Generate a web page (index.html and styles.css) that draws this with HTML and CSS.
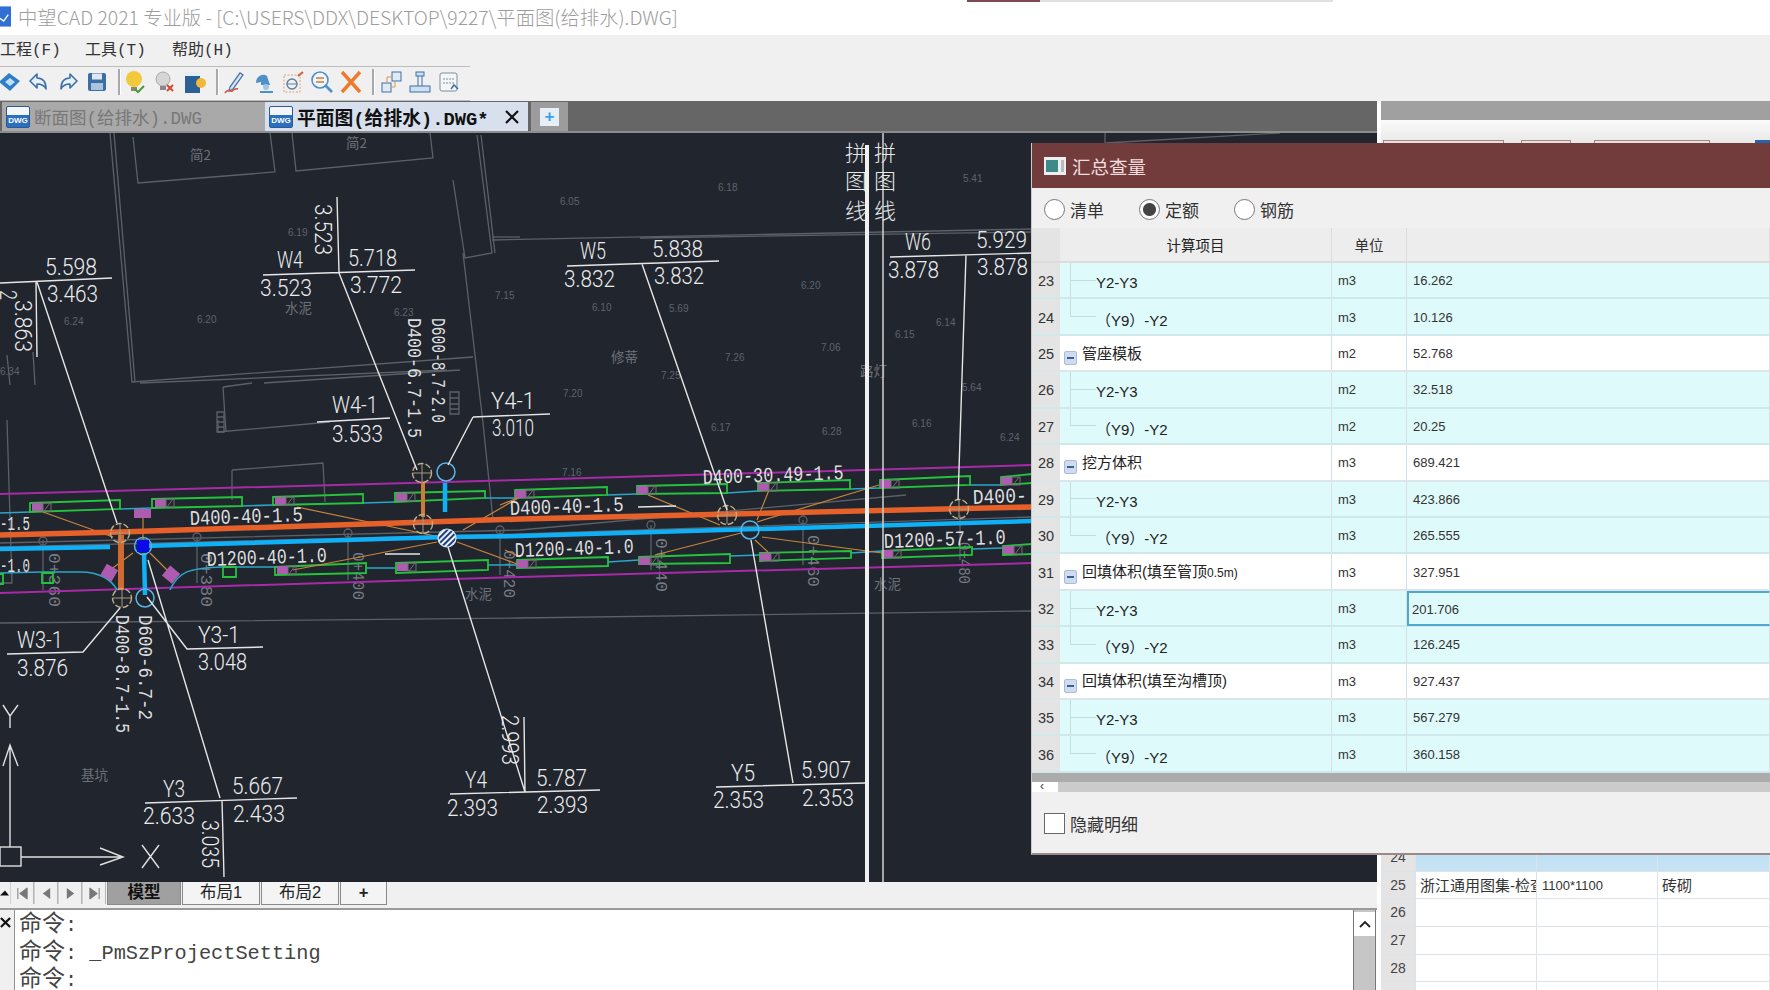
FILE: index.html
```html
<!DOCTYPE html>
<html lang="zh-CN">
<head>
<meta charset="utf-8">
<title>中望CAD 2021 专业版</title>
<link rel="stylesheet" href="styles.css">
</head>
<body>
<div class="app">
  <header class="titlebar">
    <svg class="app-icon" viewBox="0 0 12 22"><rect width="12" height="22" fill="#2f6fd6"/><path d="M0 13l4 3 5-7" fill="none" stroke="#fff" stroke-width="1.6"/></svg>
    <span class="title-text">中望CAD 2021 专业版 - [C:\USERS\DDX\DESKTOP\9227\平面图(给排水).DWG]</span>
    <span class="peek"><i class="peek-red"></i></span>
  </header>
  <nav class="menubar">
    <span class="menu-item m1">工程(F)</span><span class="menu-item m2">工具(T)</span><span class="menu-item m3">帮助(H)</span>
  </nav>
  <div class="toolbar">
    <div class="tool-group g1">
      <svg class="tool" viewBox="0 0 24 24"><path d="M1 12L11 3l11 8-10 10z" fill="#2f7fc8"/><path d="M7 12l5-4 5 4-5 4z" fill="#bfe0f5"/></svg>
      <svg class="tool" viewBox="0 0 24 24"><path d="M10 4L3 11l7 7v-4c4 0 7 1 9 5 0-7-3-11-9-11z" fill="#e8f0fa" stroke="#3d6fa8" stroke-width="1.6" stroke-linejoin="round"/></svg>
      <svg class="tool" viewBox="0 0 24 24"><path d="M14 4l7 7-7 7v-4c-4 0-7 1-9 5 0-7 3-11 9-11z" fill="#e8f0fa" stroke="#3d6fa8" stroke-width="1.6" stroke-linejoin="round"/></svg>
      <svg class="tool" viewBox="0 0 24 24"><rect x="3" y="3" width="18" height="18" rx="2" fill="#3a6ea5"/><rect x="7" y="3.5" width="10" height="6" fill="#dfe8f2"/><rect x="6" y="13" width="12" height="7" fill="#a8c4de"/></svg>
    </div>
    <i class="tool-sep s1"></i>
    <div class="tool-group g2">
      <svg class="tool" viewBox="0 0 24 24"><circle cx="11" cy="9" r="8" fill="#f3c93c"/><rect x="8" y="17" width="6" height="4" fill="#8a8a6a"/><path d="M12 19l3 3 6-6" fill="none" stroke="#4a9a3a" stroke-width="2"/></svg>
      <svg class="tool" viewBox="0 0 24 24"><circle cx="10" cy="9" r="7" fill="#d5d5d5" stroke="#aaa"/><rect x="7" y="16" width="6" height="4" fill="#888"/><path d="M14 15l6 6m0-6l-6 6" stroke="#d2482e" stroke-width="2"/></svg>
      <svg class="tool" viewBox="0 0 24 24"><rect x="2" y="2" width="15" height="21" fill="#2c5f96"/><rect x="2" y="2" width="15" height="4" fill="#e5edf5"/><circle cx="18" cy="13" r="5" fill="#f0b93a"/></svg>
    </div>
    <i class="tool-sep s2"></i>
    <div class="tool-group g3">
      <svg class="tool" viewBox="0 0 24 24"><path d="M7 17L17 3l3 2-10 14-4 2z" fill="#dfe8f2" stroke="#4b79ad" stroke-width="1.3"/><path d="M2 23c3-5 5-1 7-2s3-3 6-2" fill="none" stroke="#d8503c" stroke-width="1.5"/></svg>
      <svg class="tool" viewBox="0 0 24 24"><path d="M4 13c0-7 7-10 11-7l3 9H9v-3z" fill="#4f90c8"/><circle cx="14" cy="17" r="3" fill="#9cc7e8"/><path d="M8 22h13" stroke="#4f90c8" stroke-width="2"/></svg>
      <svg class="tool" viewBox="0 0 24 24"><rect x="3" y="5" width="16" height="17" fill="none" stroke="#e0a07a" stroke-dasharray="2 1.5"/><circle cx="11" cy="14" r="5" fill="none" stroke="#5b7f9e" stroke-width="1.4"/><path d="M6 14h10" stroke="#5b7f9e"/><path d="M17 6l5-4" stroke="#e05a2a" stroke-width="2"/></svg>
      <svg class="tool" viewBox="0 0 24 24"><circle cx="10" cy="10" r="8" fill="#eef5fb" stroke="#4f90c8" stroke-width="1.6"/><path d="M15 15l7 7" stroke="#4f90c8" stroke-width="2.6"/><path d="M6 8h8M6 12h8" stroke="#e0782a" stroke-width="1.6"/></svg>
      <svg class="tool" viewBox="0 0 24 24"><path d="M3 2l18 20M21 2L3 22" stroke="#ee7a2a" stroke-width="3.4"/></svg>
    </div>
    <i class="tool-sep s3"></i>
    <div class="tool-group g4">
      <svg class="tool" viewBox="0 0 24 24"><rect x="13" y="2" width="9" height="9" fill="#dfeaf5" stroke="#3d6fa8"/><rect x="3" y="13" width="9" height="9" fill="#dfeaf5" stroke="#3d6fa8"/><path d="M8 13V7h5M16 11v6h-4" fill="none" stroke="#d69a4a"/></svg>
      <svg class="tool" viewBox="0 0 24 24"><rect x="8" y="2" width="8" height="4" fill="#cfe0f0" stroke="#3d6fa8"/><path d="M10 6v10M14 6v10" stroke="#3d6fa8"/><rect x="2" y="16" width="20" height="6" fill="#cfe0f0" stroke="#3d6fa8"/></svg>
      <svg class="tool" viewBox="0 0 24 24"><rect x="3" y="3" width="17" height="18" rx="2" fill="#f4f6f8" stroke="#7d8ea0"/><path d="M6 9h11M6 13h11" stroke="#7d8ea0" stroke-dasharray="2 1"/><path d="M14 19l3-4 4 4" fill="none" stroke="#3d6fa8" stroke-width="1.5"/></svg>
    </div>
  </div>

  <div class="workspace">
    <section class="cad">
      <div class="doc-tabs">
        <div class="doc-tab doc-off">
          <span class="dwg-icon"><b class="dwg-label">DWG</b></span>
          <span class="doc-name">断面图(给排水).DWG</span>
        </div>
        <div class="doc-tab doc-on">
          <span class="dwg-icon"><b class="dwg-label">DWG</b></span>
          <span class="doc-name">平面图(给排水).DWG*</span>
          <svg class="doc-close" viewBox="0 0 14 14"><path d="M1 1l12 12M13 1L1 13" stroke="#111" stroke-width="2.2"/></svg>
        </div>
        <div class="doc-add"><span class="doc-plus">+</span></div>
      </div>

      <svg class="drawing" viewBox="0 133 1377 749" xmlns="http://www.w3.org/2000/svg">
        <defs>
          <g id="mk"><rect width="11" height="8" class="mk-fill"/><rect x="11" width="8" height="8" class="mk-box"/><path d="M12 8l6-8" class="mk-box"/></g>
          <g id="nb"><circle r="9.5" class="node-b"/><path d="M-9 0H9M0-9V9" class="node-x"/></g>
          <g id="nc"><circle r="9" class="node-c"/></g>
          <pattern id="hatch" width="4" height="4" patternUnits="userSpaceOnUse" patternTransform="rotate(-45)"><rect width="4" height="2" fill="#f0f0f0"/><rect y="2" width="4" height="2" fill="#1a3f88"/></pattern>
        </defs>

        <!-- site background -->
        <g class="ln-bg">
          <path d="M110 133L132 382L473 357"/><path d="M114 133L135 382"/><path d="M140 383L447 370"/>
          <path d="M133 137L138 183L275 172L270 133"/><path d="M292 133L296 171L433 158L430 133"/>
          <path d="M477 135L492 253L465 258L453 180"/><path d="M481 135L495 253"/><path d="M492 237H520"/>
          <path d="M463 253L483 423L493 520"/><path d="M223 387L226 432M223 387L252 383M264 383L460 370"/>
          <path d="M218 420V432L330 422"/><path d="M232 470L323 463L325 502M232 470V500"/>
          <path d="M7 420L12 583H0"/><path d="M7 355L10 385M33 352L35 385"/>
          <path d="M492 240L1031 229"/><path d="M640 238L1031 232"/>
          <path d="M0 543L520 530L906 495"/><path d="M0 547L520 534L1031 517"/>
          <path d="M0 623L520 618L1031 611"/>
          <path d="M1105 143L1280 133M1105 133V143"/>
          <path d="M43 540V590M197 537V583M348 533V580M500 530V575M651 525V570M803 520V565M960 515V560"/>
          <circle cx="43" cy="541" r="4"/><circle cx="197" cy="537" r="4"/><circle cx="348" cy="533" r="4"/><circle cx="500" cy="530" r="4"/><circle cx="651" cy="525" r="4"/><circle cx="803" cy="520" r="4"/>
          <path d="M217 412h7v20h-7zM217 417h7M217 422h7M217 427h7M450 392h9v22h-9zM450 398h9M450 404h9M450 409h9"/>
        </g>
        <g class="tx-gray">
          <text x="288" y="236">6.19</text><text x="64" y="325">6.24</text><text x="197" y="323">6.20</text><text x="394" y="316">6.23</text><text x="495" y="299">7.15</text><text x="0" y="375">6.34</text>
          <text x="560" y="205">6.05</text><text x="718" y="191">6.18</text><text x="963" y="182">5.41</text><text x="801" y="289">6.20</text><text x="592" y="311">6.10</text><text x="669" y="312">5.69</text><text x="936" y="326">6.14</text><text x="895" y="338">6.15</text><text x="725" y="361">7.26</text><text x="821" y="351">7.06</text><text x="661" y="379">7.25</text><text x="563" y="397">7.20</text><text x="962" y="391">5.64</text><text x="711" y="431">6.17</text><text x="912" y="427">6.16</text><text x="562" y="476">7.16</text><text x="822" y="435">6.28</text><text x="1000" y="441">6.24</text>
        </g>
        <g class="tx-gray-cn">
          <text x="190" y="160">简2</text><text x="346" y="148">简2</text><text x="285" y="313">水泥</text><text x="611" y="362">修蒂</text><text x="860" y="376">路灯</text><text x="465" y="599">水泥</text><text x="874" y="589">水泥</text><text x="81" y="780">基坑</text>
        </g>
        <g class="tx-stake">
          <text transform="translate(49,553) rotate(90)" textLength="54" lengthAdjust="spacingAndGlyphs">0+360</text>
          <text transform="translate(201,553) rotate(90)" textLength="54" lengthAdjust="spacingAndGlyphs">0+380</text>
          <text transform="translate(353,552) rotate(90)" textLength="48" lengthAdjust="spacingAndGlyphs">0+400</text>
          <text transform="translate(504,550) rotate(90)" textLength="48" lengthAdjust="spacingAndGlyphs">0+420</text>
          <text transform="translate(656,538) rotate(90)" textLength="54" lengthAdjust="spacingAndGlyphs">0+440</text>
          <text transform="translate(808,535) rotate(90)" textLength="52" lengthAdjust="spacingAndGlyphs">0+460</text>
          <text transform="translate(959,542) rotate(90)" textLength="42" lengthAdjust="spacingAndGlyphs">0+480</text>
        </g>

        <!-- pipe corridor -->
        <g class="ln-mag"><path d="M0 494L520 480L1032 465"/><path d="M0 593L520 577L1032 563"/></g>
        <g class="ln-cyan">
          <path d="M0 513L30 512M120 509L152 508M242 506L273 505M363 503L395 502M485 498L515 498M607 495L637 494M727 493L758 491M850 489L880 488M970 485L1001 485"/>
          <path d="M0 573L42 572H80C100 572 112 580 117 590M170 590C178 572 188 568 223 567H275M366 568H396M488 565H517M608 562L639 560M730 556L760 555M851 553L882 551M972 549L1003 548"/>
        </g>
        <g class="ln-green">
          <path d="M30 503L120 500V509L30 512Z"/><path d="M152 499L242 497V506L152 508Z"/><path d="M273 497L363 494V503L273 505Z"/><path d="M395 493L485 491V498L395 502Z"/>
          <path d="M515 490L607 487V495L515 498Z"/><path d="M637 486L727 484V493L637 494Z"/><path d="M758 483L850 480V489L758 491Z"/><path d="M880 480L970 476V485L880 488Z"/><path d="M1032 474L1001 477V485L1032 483"/>
          <path d="M0 574H3V584H0M42 573H53V583H42Z"/><path d="M223 567H236V577H223Z"/><path d="M275 567L366 563V573L275 575Z"/><path d="M396 563L488 560V570L396 573Z"/>
          <path d="M517 560L608 557V566L517 568Z"/><path d="M639 557L730 554V563L639 564Z"/><path d="M760 553L851 551V558L760 561Z"/><path d="M882 551L972 547V555L882 558Z"/><path d="M1032 544L1003 546V555L1032 554"/>
        </g>
        <g class="ln-leader">
          <path d="M43 512L113 537M297 507L440 537M293 570L437 542M457 542L520 565M463 530L520 497M143 508V540M150 553L170 573M133 553L110 570"/>
          <path d="M648 495L720 525M655 555L741 533M762 537L882 553M755 540L768 552M757 520L769 490M757 522L879 485M500 505L520 497M505 550L520 557"/>
        </g>
        <g class="ln-orange"><path d="M0 535L120 532L520 519L1032 507"/><path class="thick-v" d="M121 535V590"/><path class="thin-v" d="M423 482V517"/></g>
        <g class="ln-blue"><path d="M0 549L110 547M143 546L447 537L520 536L1032 521"/><path d="M144 553L145 595"/><path d="M445 483V512"/></g>
        <g>
          <use href="#mk" x="32" y="503"/><use href="#mk" x="155" y="499"/><use href="#mk" x="275" y="497"/><use href="#mk" x="396" y="493"/>
          <use href="#mk" x="515" y="490"/><use href="#mk" x="637" y="486"/><use href="#mk" x="758" y="483"/><use href="#mk" x="880" y="480"/><use href="#mk" x="1001" y="477"/>
          <use href="#mk" x="277" y="566"/><use href="#mk" x="397" y="563"/><use href="#mk" x="517" y="560"/><use href="#mk" x="639" y="557"/><use href="#mk" x="760" y="553"/><use href="#mk" x="882" y="550"/><use href="#mk" x="1003" y="546"/>
          <rect x="134" y="509" width="17" height="9" class="mk-fill"/>
          <rect x="103" y="566" width="13" height="13" class="mk-fill" transform="rotate(30 109 572)"/>
          <rect x="165" y="568" width="13" height="13" class="mk-fill" transform="rotate(40 171 574)"/>
        </g>
        <use href="#nb" x="120" y="533"/><use href="#nb" x="122" y="598"/><use href="#nb" x="422" y="473"/><use href="#nb" x="423" y="524"/><use href="#nb" x="727" y="515"/><use href="#nb" x="959" y="509"/>
        <use href="#nc" x="145" y="598"/><use href="#nc" x="446" y="472"/><use href="#nc" x="750" y="530"/>
        <circle cx="143" cy="546" r="8.5" class="node-c"/><rect x="137" y="540" width="12" height="12" class="node-fill"/>
        <circle cx="447" cy="538" r="9" class="node-h" fill="url(#hatch)"/>

        <!-- leaders -->
        <g class="ln-white">
          <path d="M0 283L112 278M36 282L37 357M37 282L117 523"/>
          <path d="M263 275L415 270M337 197L339 273M339 273L417 470"/>
          <path d="M317 422L390 418M473 417L550 414M473 417L448 465"/>
          <path d="M567 266L719 261M642 264L727 510M751 540L793 783"/>
          <path d="M890 257L1031 253M966 255L958 500"/>
          <path d="M7 654L83 652L120 608M263 647L187 649L147 597M148 560L220 798"/>
          <path d="M145 803L297 798M222 800L224 877M448 547L525 792M450 794L600 790M524 717L525 792M716 787L865 783"/>
          <path d="M385 554H420M638 507L676 506"/>
          <path d="M883 133V882" class="ln-join"/>
          <path d="M867 145V882" class="ln-thick"/>
        </g>
        <g class="ucs">
          <path d="M10 847V745M3 766L10 745L18 766M21 857H123M100 848L123 857L100 865M3 705L10 716L18 705M10 716V728M142 845L159 868M159 845L142 868"/>
          <rect x="0" y="847" width="21" height="19"/>
        </g>

        <!-- labels -->
        <g class="tx">
          <text x="45" y="275" textLength="52" lengthAdjust="spacingAndGlyphs">5.598</text>
          <text x="47" y="302" textLength="51" lengthAdjust="spacingAndGlyphs">3.463</text>
          <text x="277" y="268" textLength="26" lengthAdjust="spacingAndGlyphs">W4</text>
          <text x="260" y="296" textLength="52" lengthAdjust="spacingAndGlyphs">3.523</text>
          <text x="348" y="266" textLength="49" lengthAdjust="spacingAndGlyphs">5.718</text>
          <text x="350" y="293" textLength="52" lengthAdjust="spacingAndGlyphs">3.772</text>
          <text x="332" y="413" textLength="46" lengthAdjust="spacingAndGlyphs">W4-1</text>
          <text x="332" y="442" textLength="51" lengthAdjust="spacingAndGlyphs">3.533</text>
          <text x="491" y="409" textLength="44" lengthAdjust="spacingAndGlyphs">Y4-1</text>
          <text x="492" y="436" textLength="42" lengthAdjust="spacingAndGlyphs">3.010</text>
          <text x="580" y="259" textLength="26" lengthAdjust="spacingAndGlyphs">W5</text>
          <text x="564" y="287" textLength="51" lengthAdjust="spacingAndGlyphs">3.832</text>
          <text x="652" y="257" textLength="51" lengthAdjust="spacingAndGlyphs">5.838</text>
          <text x="654" y="284" textLength="50" lengthAdjust="spacingAndGlyphs">3.832</text>
          <text x="905" y="250" textLength="26" lengthAdjust="spacingAndGlyphs">W6</text>
          <text x="888" y="278" textLength="51" lengthAdjust="spacingAndGlyphs">3.878</text>
          <text x="976" y="248" textLength="51" lengthAdjust="spacingAndGlyphs">5.929</text>
          <text x="977" y="275" textLength="51" lengthAdjust="spacingAndGlyphs">3.878</text>
          <text x="17" y="648" textLength="46" lengthAdjust="spacingAndGlyphs">W3-1</text>
          <text x="17" y="676" textLength="51" lengthAdjust="spacingAndGlyphs">3.876</text>
          <text x="198" y="643" textLength="42" lengthAdjust="spacingAndGlyphs">Y3-1</text>
          <text x="198" y="670" textLength="49" lengthAdjust="spacingAndGlyphs">3.048</text>
          <text x="163" y="797" textLength="22" lengthAdjust="spacingAndGlyphs">Y3</text>
          <text x="143" y="824" textLength="52" lengthAdjust="spacingAndGlyphs">2.633</text>
          <text x="232" y="794" textLength="51" lengthAdjust="spacingAndGlyphs">5.667</text>
          <text x="233" y="822" textLength="52" lengthAdjust="spacingAndGlyphs">2.433</text>
          <text x="465" y="788" textLength="22" lengthAdjust="spacingAndGlyphs">Y4</text>
          <text x="447" y="816" textLength="51" lengthAdjust="spacingAndGlyphs">2.393</text>
          <text x="536" y="786" textLength="51" lengthAdjust="spacingAndGlyphs">5.787</text>
          <text x="537" y="813" textLength="51" lengthAdjust="spacingAndGlyphs">2.393</text>
          <text x="731" y="781" textLength="24" lengthAdjust="spacingAndGlyphs">Y5</text>
          <text x="713" y="808" textLength="51" lengthAdjust="spacingAndGlyphs">2.353</text>
          <text x="801" y="778" textLength="50" lengthAdjust="spacingAndGlyphs">5.907</text>
          <text x="802" y="806" textLength="52" lengthAdjust="spacingAndGlyphs">2.353</text>
          <text transform="translate(15,300) rotate(90)" textLength="52" lengthAdjust="spacingAndGlyphs">3.863</text>
          <text transform="translate(315,204) rotate(90)" textLength="51" lengthAdjust="spacingAndGlyphs">3.523</text>
          <text transform="translate(202,820) rotate(90)" textLength="48" lengthAdjust="spacingAndGlyphs">3.035</text>
          <text transform="translate(502,715) rotate(90)" textLength="50" lengthAdjust="spacingAndGlyphs">2.993</text>
          <text transform="translate(0,290) rotate(90)" textLength="10" lengthAdjust="spacingAndGlyphs">2</text>
        </g>
        <g class="tx-pipe">
          <text x="0" y="530" textLength="30" lengthAdjust="spacingAndGlyphs">-1.5</text>
          <text x="0" y="572" textLength="30" lengthAdjust="spacingAndGlyphs">-1.0</text>
          <text transform="translate(190,525) rotate(-2)" textLength="113" lengthAdjust="spacingAndGlyphs">D400-40-1.5</text>
          <text transform="translate(207,566) rotate(-2)" textLength="120" lengthAdjust="spacingAndGlyphs">D1200-40-1.0</text>
          <text transform="translate(510,515) rotate(-2)" textLength="114" lengthAdjust="spacingAndGlyphs">D400-40-1.5</text>
          <text transform="translate(515,557) rotate(-2)" textLength="119" lengthAdjust="spacingAndGlyphs">D1200-40-1.0</text>
          <text transform="translate(703,484) rotate(-2)" textLength="141" lengthAdjust="spacingAndGlyphs">D400-30.49-1.5</text>
          <text transform="translate(884,548) rotate(-2)" textLength="122" lengthAdjust="spacingAndGlyphs">D1200-57-1.0</text>
          <text transform="translate(973,504) rotate(-2)" textLength="54" lengthAdjust="spacingAndGlyphs">D400-</text>
          <text transform="translate(432,318) rotate(90)" textLength="105" lengthAdjust="spacingAndGlyphs">D600-8.7-2.0</text>
          <text transform="translate(408,318) rotate(90)" textLength="120" lengthAdjust="spacingAndGlyphs">D400-6.7-1.5</text>
          <text transform="translate(116,615) rotate(90)" textLength="118" lengthAdjust="spacingAndGlyphs">D400-8.7-1.5</text>
          <text transform="translate(139,615) rotate(90)" textLength="105" lengthAdjust="spacingAndGlyphs">D600-6.7-2</text>
        </g>
        <g class="tx-cn">
          <text x="845" y="161">拼</text><text x="845" y="189">图</text><text x="845" y="219">线</text>
          <text x="874" y="161">拼</text><text x="874" y="189">图</text><text x="874" y="219">线</text>
        </g>
      </svg>

      <div class="layout-tabs">
        <svg class="nav-first" viewBox="0 0 9 9"><path d="M0 7L5 2l4 5z" fill="#111"/></svg>
        <span class="nav-btn"><svg class="nav-glyph" viewBox="0 0 14 14"><path d="M2 1v12M12 1L4 7l8 6z" fill="#777" stroke="#777"/></svg></span>
        <span class="nav-btn"><svg class="nav-glyph" viewBox="0 0 14 14"><path d="M11 1L3 7l8 6z" fill="#777"/></svg></span>
        <span class="nav-btn"><svg class="nav-glyph" viewBox="0 0 14 14"><path d="M3 1l8 6-8 6z" fill="#777"/></svg></span>
        <span class="nav-btn"><svg class="nav-glyph" viewBox="0 0 14 14"><path d="M12 1v12M2 1l8 6-8 6z" fill="#777" stroke="#777"/></svg></span>
        <span class="sheet sheet-on">模型</span>
        <span class="sheet">布局1</span>
        <span class="sheet">布局2</span>
        <span class="sheet sheet-add">+</span>
      </div>
      <div class="command">
        <div class="cmd-side"><svg class="cmd-x" viewBox="0 0 12 12"><path d="M1 1l10 10M11 1L1 11" stroke="#111" stroke-width="2.4"/></svg></div>
        <div class="cmd-text">
          <div class="cmd-line"><span class="cmd-cn">命令</span>:</div>
          <div class="cmd-line"><span class="cmd-cn">命令</span>: _PmSzProjectSetting</div>
          <div class="cmd-line"><span class="cmd-cn">命令</span>:</div>
        </div>
        <div class="cmd-scroll"><span class="cmd-up"><svg class="cmd-chevron" viewBox="0 0 12 8"><path d="M1 7l5-5 5 5" fill="none" stroke="#222" stroke-width="1.8"/></svg></span></div>
      </div>
    </section>

    <aside class="side">
      <div class="side-bar"></div>
      <div class="side-tabs"><i class="st st1"></i><i class="st st2"></i><i class="st st3"></i><i class="st st4"></i></div>
      <div class="side-table">
        <div class="srow srow-blue"><span class="snum">24</span><span></span><span></span><span></span></div>
        <div class="srow"><span class="snum">25</span><span class="scell">浙江通用图集-检查井</span><span class="scell scell-n">1100*1100</span><span class="scell">砖砌</span></div>
        <div class="srow"><span class="snum">26</span><span></span><span></span><span></span></div>
        <div class="srow"><span class="snum">27</span><span></span><span></span><span></span></div>
        <div class="srow"><span class="snum">28</span><span></span><span></span><span></span></div>
        <div class="srow"><span class="snum"></span><span></span><span></span><span></span></div>
      </div>
    </aside>
  </div>
</div>

<div class="dialog">
  <div class="dlg-title">
    <svg class="dlg-icon" viewBox="0 0 22 18"><rect width="22" height="18" fill="#eee"/><rect x="2" y="3" width="12" height="12" fill="#3d8a8a"/><rect x="17" y="3" width="3" height="12" fill="#bbb"/></svg>
    <span>汇总查量</span>
  </div>
  <div class="dlg-radios">
    <span class="radio r1"></span><span class="radio-label l1">清单</span>
    <span class="radio radio-on r2"></span><span class="radio-label l2">定额</span>
    <span class="radio r3"></span><span class="radio-label l3">钢筋</span>
  </div>
  <div class="grid">
    <div class="row row-head"><span class="gut"></span><span class="c-name">计算项目</span><span class="c-unit">单位</span><span class="c-val"></span></div>
    <div class="row child"><span class="gut">23</span><span class="c-name"><i class="branch"></i><span class="lab">Y2-Y3</span></span><span class="c-unit">m3</span><span class="c-val">16.262</span></div>
    <div class="row child"><span class="gut">24</span><span class="c-name"><i class="branch branch-end"></i><span class="lab lab-p">（Y9）-Y2</span></span><span class="c-unit">m3</span><span class="c-val">10.126</span></div>
    <div class="row group"><span class="gut">25</span><span class="c-name"><i class="minus"></i><span class="lab-g">管座模板</span></span><span class="c-unit">m2</span><span class="c-val">52.768</span></div>
    <div class="row child"><span class="gut">26</span><span class="c-name"><i class="branch"></i><span class="lab">Y2-Y3</span></span><span class="c-unit">m2</span><span class="c-val">32.518</span></div>
    <div class="row child"><span class="gut">27</span><span class="c-name"><i class="branch branch-end"></i><span class="lab lab-p">（Y9）-Y2</span></span><span class="c-unit">m2</span><span class="c-val">20.25</span></div>
    <div class="row group"><span class="gut">28</span><span class="c-name"><i class="minus"></i><span class="lab-g">挖方体积</span></span><span class="c-unit">m3</span><span class="c-val">689.421</span></div>
    <div class="row child"><span class="gut">29</span><span class="c-name"><i class="branch"></i><span class="lab">Y2-Y3</span></span><span class="c-unit">m3</span><span class="c-val">423.866</span></div>
    <div class="row child"><span class="gut">30</span><span class="c-name"><i class="branch branch-end"></i><span class="lab lab-p">（Y9）-Y2</span></span><span class="c-unit">m3</span><span class="c-val">265.555</span></div>
    <div class="row group"><span class="gut">31</span><span class="c-name"><i class="minus"></i><span class="lab-g">回填体积(填至管顶<small class="lab-s">0.5m)</small></span></span><span class="c-unit">m3</span><span class="c-val">327.951</span></div>
    <div class="row child"><span class="gut">32</span><span class="c-name"><i class="branch"></i><span class="lab">Y2-Y3</span></span><span class="c-unit">m3</span><span class="c-val c-sel">201.706</span></div>
    <div class="row child"><span class="gut">33</span><span class="c-name"><i class="branch branch-end"></i><span class="lab lab-p">（Y9）-Y2</span></span><span class="c-unit">m3</span><span class="c-val">126.245</span></div>
    <div class="row group"><span class="gut">34</span><span class="c-name"><i class="minus"></i><span class="lab-g">回填体积(填至沟槽顶)</span></span><span class="c-unit">m3</span><span class="c-val">927.437</span></div>
    <div class="row child"><span class="gut">35</span><span class="c-name"><i class="branch"></i><span class="lab">Y2-Y3</span></span><span class="c-unit">m3</span><span class="c-val">567.279</span></div>
    <div class="row child"><span class="gut">36</span><span class="c-name"><i class="branch branch-end"></i><span class="lab lab-p">（Y9）-Y2</span></span><span class="c-unit">m3</span><span class="c-val">360.158</span></div>
  </div>
  <div class="grid-end"></div>
  <div class="hscroll"><span class="hs-arrow">‹</span><span class="hs-track"></span></div>
  <div class="dlg-foot"><span class="check"></span><span class="radio-label">隐藏明细</span></div>
</div>
</body>
</html>
```

FILE: styles.css
```css
* { box-sizing: border-box; }
html, body { margin: 0; padding: 0; width: 1770px; height: 990px; overflow: hidden; background: #fff; }
body { font-family: "Liberation Sans", "Noto Sans CJK SC", sans-serif; color: #222; position: relative; }
.app { display: flex; flex-direction: column; width: 1770px; height: 990px; }

/* title */
.titlebar { height: 35px; display: flex; align-items: center; background: #fff; position: relative; flex: none; padding-bottom: 2px; }
.app-icon { width: 11px; height: 21px; margin-right: 7px; flex: none; }
.title-text { font-size: 19.35px; color: #9d9d9d; white-space: nowrap; font-family: "Noto Sans CJK SC", "Liberation Sans", sans-serif; font-weight: 300; }
.peek { position: absolute; left: 967px; top: 0; width: 366px; height: 2px; background: #e0e0e0; }
.peek-red { display: block; width: 73px; height: 2px; background: #7c4a50; }

/* menu */
.menubar { height: 31px; background: #f0f0f0; display: flex; align-items: center; flex: none; padding-bottom: 6px; font-family: "Liberation Mono", "Noto Sans CJK SC", monospace; font-size: 16px; color: #333; }
.menu-item { white-space: nowrap; }
.m1 { width: 85px; }
.m2 { width: 87px; }

/* toolbar */
.toolbar { height: 35px; background: #f0f0f0; display: flex; align-items: center; flex: none; position: relative; padding-bottom: 4px; border-top: 1px solid #bdbdbd; border-bottom: 1px solid #fff; border-image: linear-gradient(90deg, #bdbdbd 470px, #f0f0f0 470px) 1; }
.tool-group { display: flex; align-items: center; }
.tool { width: 24px; height: 24px; flex: none; display: block; }
.g1 { gap: 5px; margin-left: -2px; }
.g2 { gap: 6px; margin-left: 2px; }
.g3 { gap: 5px; margin-left: 4px; }
.g4 { gap: 5px; margin-left: 4px; }
.tool-sep { width: 3px; height: 26px; background: #a9a9a9; border-right: 1px solid #fff; margin-left: 9px; flex: none; }

/* workspace */
.workspace { display: flex; flex: 1; min-height: 0; }
.cad { width: 1377px; display: flex; flex-direction: column; flex: none; }

/* doc tabs */
.doc-tabs { height: 32px; background: #666; display: flex; padding-left: 2px; padding-top: 1px; border-bottom: 2px solid #8d8d8d; flex: none; }
.doc-tab { width: 263px; display: flex; align-items: center; padding-left: 4px; white-space: nowrap; font-family: "Liberation Mono", "Noto Sans CJK SC", monospace; font-size: 17.5px; }
.doc-off { background: #a9a9a9; color: #787878; }
.doc-on { background: #d7e0ec; color: #111; font-weight: 700; font-size: 18.8px; }
.dwg-icon { width: 24px; height: 22px; background: linear-gradient(#f4f6f8 40%, #2a6fc0 40%); border: 1px solid #2a5a98; border-radius: 2px; margin-right: 4px; display: flex; align-items: flex-end; justify-content: center; flex: none; }
.dwg-label { font-family: "Liberation Sans", sans-serif; font-size: 8px; line-height: 12px; color: #fff; font-weight: 700; }
.doc-close { width: 14px; height: 14px; margin-left: 16px; flex: none; }
.doc-add { width: 37px; background: #9c9c9c; margin-left: 3px; display: flex; align-items: center; justify-content: center; }
.doc-plus { width: 19px; height: 18px; background: #e8eef5; color: #3ba2e8; font-size: 17px; line-height: 17px; text-align: center; font-weight: 700; }

/* canvas */
.drawing { width: 1377px; height: 749px; display: block; background: #20252e; flex: none; fill: none; }
.ln-bg path, .ln-bg circle { stroke: #5c6168; stroke-width: 1.3; }
.ln-mag path { stroke: #a82aa8; stroke-width: 2; }
.ln-cyan path { stroke: #2aa6c8; stroke-width: 1.6; }
.ln-green path { stroke: #25c23c; stroke-width: 1.8; }
.ln-leader path { stroke: #c9853a; stroke-width: 1.2; }
.ln-orange path { stroke: #e6602a; stroke-width: 5.5; }
.ln-orange .thick-v { stroke: #cf6a30; stroke-width: 6; }
.ln-orange .thin-v { stroke: #cf7a3a; stroke-width: 4; }
.ln-blue path { stroke: #0fb0f6; stroke-width: 4.5; }
.ln-white path { stroke: #e6e6e6; stroke-width: 1.4; }
.ln-white .ln-thick { stroke: #f0f0f0; stroke-width: 4; }
.ln-white .ln-join { stroke: #c8c8c8; stroke-width: 1.6; }
.ucs path, .ucs rect { stroke: #e0e0e0; stroke-width: 1.4; }
.mk-fill { fill: #ad5cb0; }
.mk-box { stroke: #7a6a7a; stroke-width: 1; }
.node-b { stroke: #bfb08a; stroke-width: 1.4; stroke-dasharray: 6 2; }
.node-x { stroke: #a89a78; stroke-width: 1; }
.node-c { stroke: #5ab4e6; stroke-width: 1.5; }
.node-fill { fill: #0a0ae8; }
.node-h { stroke: #d8e8f4; stroke-width: 1.2; }
.tx text { font-family: Roboto, "Liberation Sans", sans-serif; font-weight: 300; font-size: 23px; fill: #ececec; }
.tx-pipe text { font-family: "Liberation Mono", monospace; font-size: 21px; fill: #dedede; }
.tx-cn text { font-family: "Noto Sans CJK SC", sans-serif; font-weight: 300; font-size: 22px; fill: #e8e8e8; }
.tx-gray text { font-family: "Liberation Sans", sans-serif; font-size: 10px; fill: #5f646b; }
.tx-gray-cn text { font-family: "Noto Sans CJK SC", sans-serif; font-size: 13.5px; fill: #6d7178; }
.tx-stake text { font-family: "Liberation Mono", monospace; font-size: 17px; fill: #777b82; }

/* layout tabs */
.layout-tabs { height: 28px; background: #f0f0f0; display: flex; align-items: flex-start; flex: none; border-bottom: 2px solid #9a9a9a; }
.nav-first { width: 9px; height: 22px; margin-right: 1px; flex: none; }
.nav-btn { width: 24px; height: 22px; border-right: 1px solid #b5b5b5; border-left: 1px solid #cfcfcf; display: flex; align-items: center; justify-content: center; flex: none; }
.nav-glyph { width: 13px; height: 13px; }
.sheet { width: 78px; height: 23px; border: 1px solid #8a8a8a; border-top: 0; margin-left: 1px; font-size: 16.5px; line-height: 21px; text-align: center; background: #f4f4f4; color: #222; flex: none; }
.sheet-on { width: 74px; background: #a0a0a0; font-weight: 700; color: #111; }
.sheet-add { width: 47px; font-weight: 700; }

/* command */
.command { flex: 1; display: flex; min-height: 0; background: #fff; }
.cmd-side { width: 15px; background: #f0f0f0; border-right: 1px solid #8f8f8f; flex: none; padding-top: 7px; }
.cmd-x { width: 11px; height: 11px; display: block; }
.cmd-text { flex: 1; padding: 2px 0 0 4px; font-family: "Liberation Mono", "Noto Sans CJK SC", monospace; font-size: 20.3px; line-height: 27.5px; color: #444; overflow: hidden; }
.cmd-line { height: 27.5px; white-space: pre; }
.cmd-cn { font-size: 23px; }
.cmd-scroll { width: 23px; margin-right: 1px; background: #c6c6c6; border-left: 1px solid #777; border-right: 1px solid #777; flex: none; }
.cmd-up { height: 24px; margin-top: 2px; background: #fff; display: flex; align-items: center; justify-content: center; }
.cmd-chevron { width: 12px; height: 8px; }

/* side panel */
.side { flex: 1; margin-left: 4px; display: flex; flex-direction: column; min-width: 0; background: #f0f0f0; }
.side-bar { height: 19px; background: #a0a0a0; flex: none; }
.side-tabs { height: 23px; flex: none; display: flex; align-items: flex-end; background: linear-gradient(#fafafa, #e8e8e8); }
.st { height: 3px; border: 1px solid #9a8a8a; border-bottom: 0; background: #eedede; flex: none; }
.st1 { width: 121px; margin-left: 2px; }
.st2 { width: 50px; margin-left: 17px; }
.st3 { width: 116px; margin-left: 23px; }
.st4 { width: 15px; margin-left: 45px; background: #2a62a8; border: 0; }
.side-table { margin-top: auto; height: 146px; overflow: hidden; flex: none; }
.srow { display: grid; grid-template-columns: 35px 121px 121px 1fr; height: 27.7px; background: #fff; border-bottom: 1px solid #dfe3e8; align-items: stretch; }
.srow > span { border-right: 1px solid #dde3ea; white-space: nowrap; overflow: hidden; }
.srow-blue { background: linear-gradient(#bcdff2, #c6e3f5); }
.srow-blue .snum { background: #e4e4e4; }
.snum { background: #e4e4e4; text-align: center; font-size: 14px; line-height: 27px; color: #444; }
.scell { font-size: 15px; line-height: 27px; padding-left: 4px; color: #333; }
.scell-n { font-size: 13px; padding-left: 5px; }

/* dialog */
.dialog { position: absolute; left: 1031px; top: 143px; width: 739px; height: 712px; background: #f0f0f0; border-left: 1px solid #ccc; border-bottom: 2px solid #9a8a8a; display: flex; flex-direction: column; overflow: hidden; }
.dlg-title { height: 45px; background: #723c3c; color: #f2dede; display: flex; align-items: center; font-size: 18.5px; padding-left: 12px; gap: 6px; flex: none; }
.dlg-icon { width: 22px; height: 18px; flex: none; }
.dlg-radios { height: 40px; display: flex; align-items: center; padding: 2px 0 0 12px; flex: none; font-size: 17px; }
.radio { width: 21px; height: 21px; border-radius: 50%; border: 1.5px solid #777; background: #fff; flex: none; }
.radio-on { background: radial-gradient(circle, #444 0 6px, #fff 7px); }
.radio-label { font-size: 17px; color: #333; margin-left: 5px; white-space: nowrap; }
.l1 { margin-right: 35px; }
.l2 { margin-right: 35px; }
.grid { flex: none; }
.row { display: grid; grid-template-columns: 28px 272px 75px 1fr; height: 36.43px; border-bottom: 2px solid #cfe8ec; background: #dffafa; }
.row > span { display: flex; align-items: center; border-right: 1px solid #d4dfe6; white-space: nowrap; }
.row-head { height: 35px; background: #ededed; border-bottom: 2px solid #dcdcdc; font-size: 14.5px; color: #333; }
.row-head > span { border-right-color: #dcdcdc; justify-content: center; }
.group { background: #fff; border-bottom-color: #dbe6ea; }
.gut { background: #e4e4e4; justify-content: center; font-size: 14.5px; color: #333; padding-top: 2px; }
.row .gut { border-right: 0; }
.c-name { font-size: 15px; color: #222; }
.c-unit { font-size: 13px; padding: 1px 0 0 6px; color: #333; }
.c-val { font-size: 13px; padding: 1px 0 0 6px; color: #333; }
.row-head .c-unit, .row-head .c-name { font-size: 14.5px; padding: 0; }
.c-sel { border: 2px solid #4fa8d0; border-right: 0; padding: 1px 0 0 3px; margin-bottom: -1px; }
.branch { width: 26px; align-self: stretch; margin-left: 10px; background: linear-gradient(#c4dede, #c4dede) 0 0 / 1px 100% no-repeat, linear-gradient(#c4dede, #c4dede) 0 50% / 100% 1px no-repeat; flex: none; }
.branch-end { background: linear-gradient(#c4dede, #c4dede) 0 0 / 1px 50% no-repeat, linear-gradient(#c4dede, #c4dede) 0 50% / 100% 1px no-repeat; }
.lab { padding-top: 5px; }
.minus { width: 13px; height: 14px; margin: 10px 5px 0 4px; background: linear-gradient(#3b5f92, #3b5f92) center / 7px 2px no-repeat, #cfdcef; border: 1px solid #a8bcd8; border-radius: 2px; flex: none; }
.lab-g { margin-top: -2px; font-size: 15px; }
.lab-s { font-size: 12px; }
.grid-end { height: 9px; background: #ababab; flex: none; }
.hscroll { height: 10px; display: flex; background: #fff; flex: none; }
.hs-arrow { width: 26px; font-size: 12px; line-height: 9px; color: #333; padding-left: 8px; }
.hs-track { flex: 1; background: #cbcbcb; }
.dlg-foot { flex: 1; display: flex; align-items: center; padding: 3px 0 0 12px; }
.check { width: 21px; height: 21px; border: 1.5px solid #666; background: #fff; flex: none; }
```
